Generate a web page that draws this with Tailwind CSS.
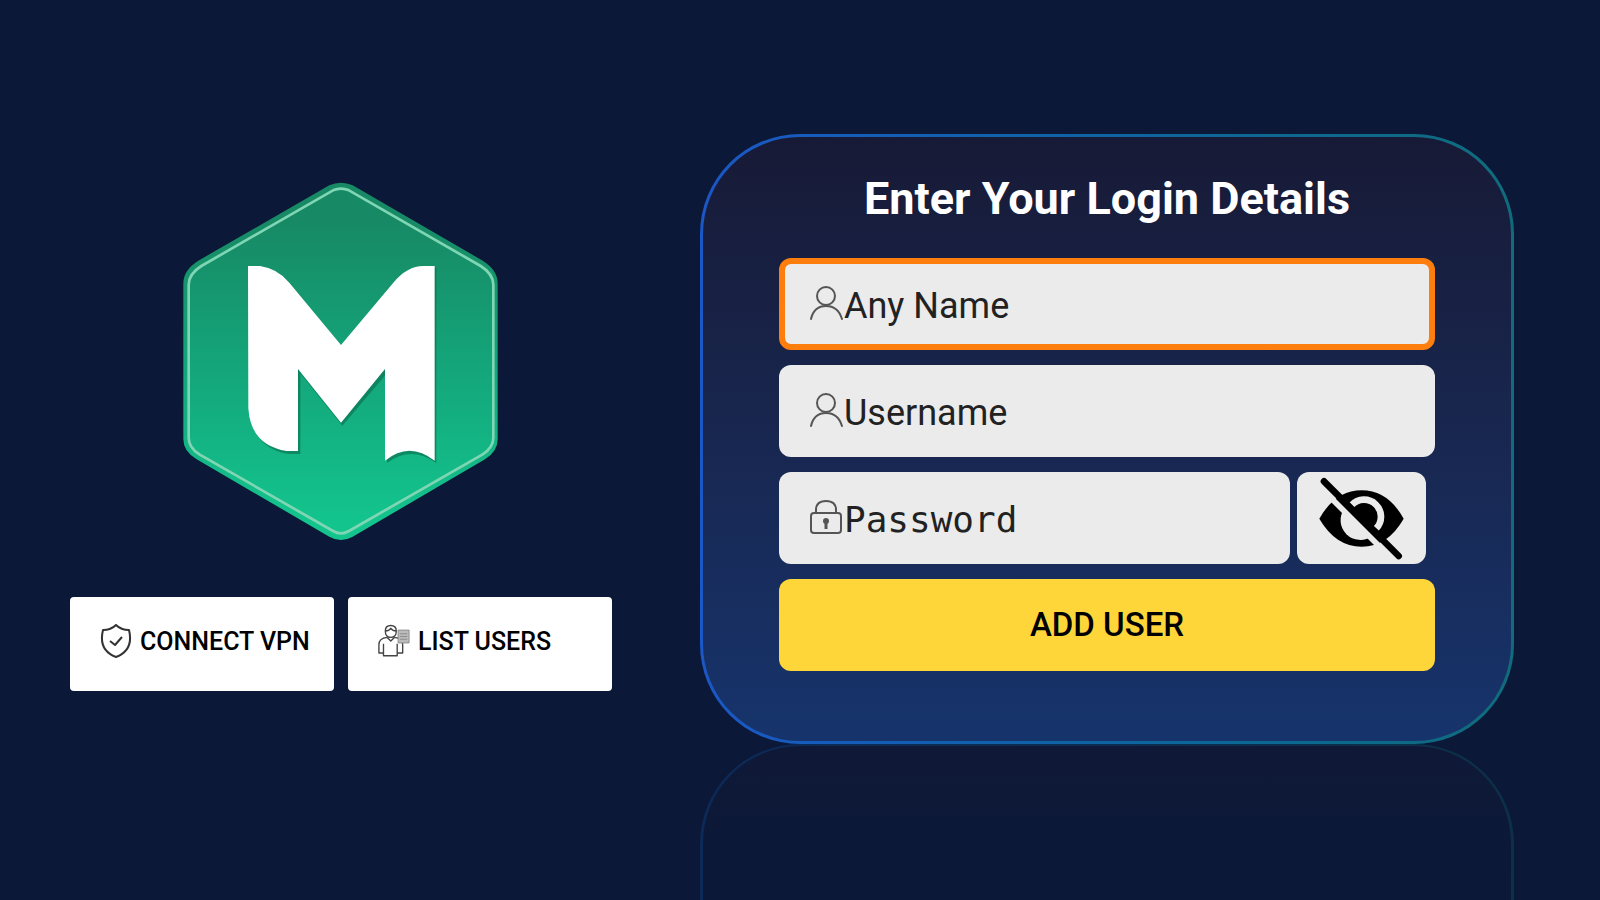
<!DOCTYPE html>
<html lang="en">

<head>
    <meta charset="UTF-8">
    <meta name="viewport" content="width=device-width, initial-scale=1.0">
    <script src="https://cdn.jsdelivr.net/npm/@tailwindcss/browser@4"></script>
    <title>Login Details</title>
</head>

<body class="bg-[#0b1838] font-[Roboto,sans-serif] text-black">
    <main class="grid min-h-screen grid-cols-[542fr_814fr] gap-[88px] pl-[70px] pr-[86px]">

        <!-- Logo and shortcuts -->
        <section class="flex flex-col items-center gap-[54px] pt-[180px]">
            <svg class="h-[363px] w-[322px]" viewBox="60 30 966 1089" role="img" aria-label="M logo">
                <defs>
                    <linearGradient id="hexFill" x1="0" y1="0" x2="0" y2="1">
                        <stop offset="0.1" stop-color="#178964" />
                        <stop offset="0.5" stop-color="#14a479" />
                        <stop offset="0.95" stop-color="#13c48d" />
                    </linearGradient>
                </defs>
                <path fill="url(#hexFill)" d="M508 46Q543 30 578 46L968 272Q1013 300 1013 340V808Q1013 845 975 868L578 1100Q543 1120 508 1100L110 868Q70 845 70 808V340Q70 300 115 272Z" />
                <path fill="none" stroke="#7fd6b4" stroke-width="8" d="M519 61Q543 51 567 61L962 288Q1000 312 1000 344V803Q1000 832 968 853L567 1083Q543 1097 519 1083L118 853Q86 832 86 803V344Q86 312 124 288Z" />
                <path fill="#0a6b4d" opacity="0.6" d="M272 296H310Q358 303 390 340L547 532L703 343Q745 293 792 293H829V879Q752 825 681 879V610L547 767L421 610V852H385Q280 835 272 725Z" />
                <path fill="#fff" d="M264 288H300Q352 295 388 338L543 525L700 338Q742 288 790 288H824V872Q748 812 675 872V597L543 758L414 597V843H380Q272 826 265 715Z" />
            </svg>

            <div class="grid w-full grid-cols-2 gap-[14px]">
                <button type="button" class="flex h-[94px] items-center gap-2 rounded bg-white pb-1 pl-[30px] text-left text-[25px] font-medium whitespace-nowrap">
                    <svg class="h-9 w-8 shrink-0" viewBox="0 0 32 36" fill="none" stroke="#333" stroke-width="2" stroke-linejoin="round" aria-hidden="true">
                        <path d="M16 1Q21 6 29 6Q34 26 16 33Q-2 26 3 6Q11 6 16 1Z" />
                        <path d="M10 17l5 4 7-8" />
                    </svg>
                    CONNECT VPN
                </button>
                <button type="button" class="flex h-[94px] items-center gap-2 rounded bg-white pb-1 pl-[30px] text-left text-[25px] font-medium whitespace-nowrap">
                    <svg class="h-9 w-8 shrink-0" viewBox="0 1 35 36" fill="none" stroke="#444" stroke-width="1.5" stroke-linejoin="round" aria-hidden="true">
                        <path d="M8 7q0-6 6-6t6 6q0 7-6 7t-6-7zM8 7q4 0 6-3q2 3 6 3" />
                        <path d="M10 14Q1 15 1 22V31H6M18 14Q27 15 27 22V31H21M10 14l4 4 4-4M6 21V34H21V21" />
                        <path fill="#bbb" stroke="#888" stroke-width="1" d="M22 6h12v14H22zM24 10h8M24 13h8M24 16h8" />
                    </svg>
                    LIST USERS
                </button>
            </div>
        </section>

        <!-- Login card with its reflection below -->
        <section class="flex flex-col pt-[134px]">
            <div class="rounded-[100px] bg-linear-to-r from-[#1b57c6] to-[#106c7c] p-[3px]">
                <form class="flex flex-col gap-[15px] rounded-[97px] bg-linear-to-b from-[#171a36] to-[#16346c] px-[76px] pt-[36px] pb-[70px]">
                    <h1 class="mb-[18px] text-center text-[45px] leading-[52px] font-bold whitespace-nowrap text-white">Enter Your Login Details</h1>

                    <label class="flex h-[92px] items-center rounded-xl border-[6px] border-[#fd7e0d] bg-[#ebebeb] px-6 pt-1">
                        <svg class="h-9 w-[35px] shrink-0" viewBox="0 2 35 36" fill="none" stroke="#555" stroke-width="2" stroke-linecap="round" overflow="visible" aria-hidden="true">
                            <circle cx="17" cy="10" r="9" />
                            <path d="M2 33Q5 20 17 20T33 33" />
                        </svg>
                        <input type="text" aria-label="Any Name" placeholder="Any Name" class="w-full min-w-0 bg-transparent text-4xl text-black outline-none placeholder:text-[#222]">
                    </label>

                    <label class="flex h-[92px] items-center rounded-xl bg-[#ebebeb] px-[30px] pt-1">
                        <svg class="h-9 w-[35px] shrink-0" viewBox="0 2 35 36" fill="none" stroke="#555" stroke-width="2" stroke-linecap="round" overflow="visible" aria-hidden="true">
                            <circle cx="17" cy="10" r="9" />
                            <path d="M2 33Q5 20 17 20T33 33" />
                        </svg>
                        <input type="text" aria-label="Username" placeholder="Username" class="w-full min-w-0 bg-transparent text-4xl text-black outline-none placeholder:text-[#222]">
                    </label>

                    <div class="flex gap-[7px] pr-[9px]">
                        <label class="flex h-[92px] min-w-0 flex-1 items-center rounded-xl bg-[#ebebeb] px-[30px] pt-1">
                            <svg class="h-9 w-[35px] shrink-0" viewBox="0 2 35 36" fill="none" stroke="#555" stroke-width="2" overflow="visible" aria-hidden="true">
                                <rect x="2" y="13" width="30" height="20" rx="3" />
                                <path d="M7 13v-3q0-9 10-9t10 9v3" />
                                <path stroke-width="3" d="M17 22v7" />
                                <circle cx="17" cy="21" r="2" fill="#555" />
                            </svg>
                            <input type="password" aria-label="Password" placeholder="Password" class="w-full min-w-0 bg-transparent font-['DejaVu_Sans_Mono',monospace] text-4xl text-black outline-none placeholder:text-[#222]">
                        </label>
                        <button type="button" aria-label="Show password" class="flex h-[92px] w-[129px] items-center justify-center rounded-xl bg-[#ebebeb]">
                            <svg class="h-[88px] w-[90px]" viewBox="170 40 270 264" aria-hidden="true">
                                <path d="M177 174Q225 89 304 89T430 174Q382 258 304 258T177 174Z" />
                                <path fill="#ebebeb" d="M252 144A59 59 0 0 0 335 226Z" />
                                <path fill="none" stroke="#ebebeb" stroke-width="20" d="M274 133A48 48 0 0 1 348 203" />
                                <path stroke="#ebebeb" stroke-width="17" d="M176 76L404 304" />
                                <path stroke="#000" stroke-width="20" stroke-linecap="round" d="M191 62L415 286" />
                            </svg>
                        </button>
                    </div>

                    <button type="submit" class="h-[92px] rounded-xl bg-[#fed63a] text-[33px] font-medium">ADD USER</button>
                </form>
            </div>
            <div class="flex flex-1 rounded-t-[100px] bg-linear-to-r from-[#0d2957] to-[#0c3048] px-[3px] pt-[2px]" aria-hidden="true">
                <div class="flex-1 rounded-t-[97px] bg-linear-to-b from-[#0f1937] to-[#0b1838]"></div>
            </div>
        </section>
    </main>
</body>

</html>
